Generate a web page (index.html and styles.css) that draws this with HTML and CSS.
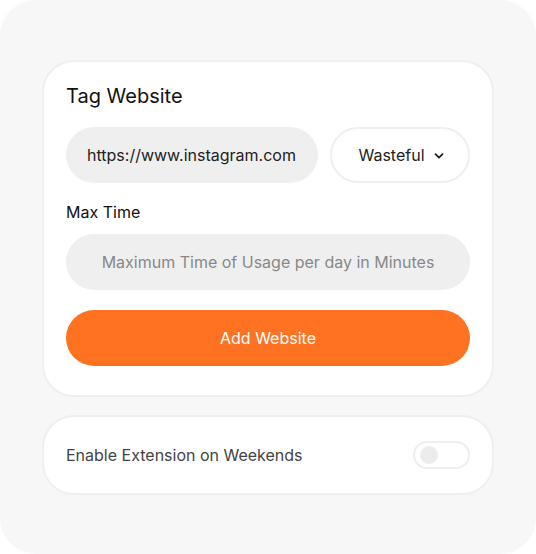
FILE: index.html
```html
<!DOCTYPE html>
<html>
<head>
<meta charset="utf-8">
<link rel="stylesheet" href="styles.css">
</head>
<body>
<div class="frame">
  <section class="card tag-card">
    <h1 class="title">Tag Website</h1>
    <div class="row">
      <div class="pill url">https://www.instagram.com</div>
      <div class="pill select">
        <span>Wasteful</span>
        <svg class="chev" width="10" height="6" viewBox="0 0 10 6"><path d="M1.5 1.2 L5 4.6 L8.5 1.2" fill="none" stroke="#222" stroke-width="1.8" stroke-linecap="round" stroke-linejoin="round"/></svg>
      </div>
    </div>
    <div class="label">Max Time</div>
    <div class="pill time">Maximum Time of Usage per day in Minutes</div>
    <button class="add">Add Website</button>
  </section>
  <section class="card weekend-card">
    <span class="weekend-text">Enable Extension on Weekends</span>
    <span class="toggle"><span class="knob"></span></span>
  </section>
</div>
</body>
</html>
```
FILE: styles.css
```css
* { box-sizing: border-box; }
html, body { margin: 0; padding: 0; background: #ffffff; }
body { font-family: Inter, "Noto Sans", sans-serif; }
.frame {
  width: 536px;
  height: 554px;
  background: #f7f7f7;
  border-radius: 36px;
  padding: 60px 42px 0;
  display: flex;
  flex-direction: column;
  gap: 18px;
}
.card {
  background: #ffffff;
  border: 2px solid #efefef;
  border-radius: 32px;
}
.tag-card {
  padding: 22px 22px 29px;
  display: flex;
  flex-direction: column;
}
.title {
  margin: 0;
  font-size: 20px;
  font-weight: 400;
  line-height: 24px;
  color: #111;
  height: 24px;
  margin-bottom: 19px;
}
.row { display: flex; gap: 12px; }
.pill {
  height: 56px;
  border-radius: 28px;
  display: flex;
  align-items: center;
  font-size: 16px;
}
.url {
  flex: 1;
  background: #efefef;
  padding: 0 21px;
  color: #222;
}
.select {
  width: 140px;
  background: #fff;
  border: 2px solid #efefef;
  justify-content: center;
  gap: 9px;
  color: #222;
  padding-left: 2px;
}
.chev { display: block; margin-top: 1px; }
.label {
  font-size: 16px;
  line-height: 20px;
  color: #111;
  margin: 19px 0 12px;
}
.time {
  background: #efefef;
  justify-content: center;
  color: #888;
}
.add {
  margin-top: 20px;
  height: 56px;
  border: none;
  border-radius: 28px;
  background: #ff7222;
  color: #fff;
  font-family: inherit;
  font-size: 16px;
  padding: 0;
}
.weekend-card {
  height: 80px;
  padding: 0 22px;
  display: flex;
  align-items: center;
  justify-content: space-between;
}
.weekend-text { font-size: 16px; color: #444; }
.toggle {
  width: 57px;
  height: 28px;
  border: 2px solid #efefef;
  border-radius: 14px;
  display: flex;
  align-items: center;
  padding-left: 5px;
}
.knob {
  width: 18px;
  height: 18px;
  border-radius: 50%;
  background: #ececec;
}
```
